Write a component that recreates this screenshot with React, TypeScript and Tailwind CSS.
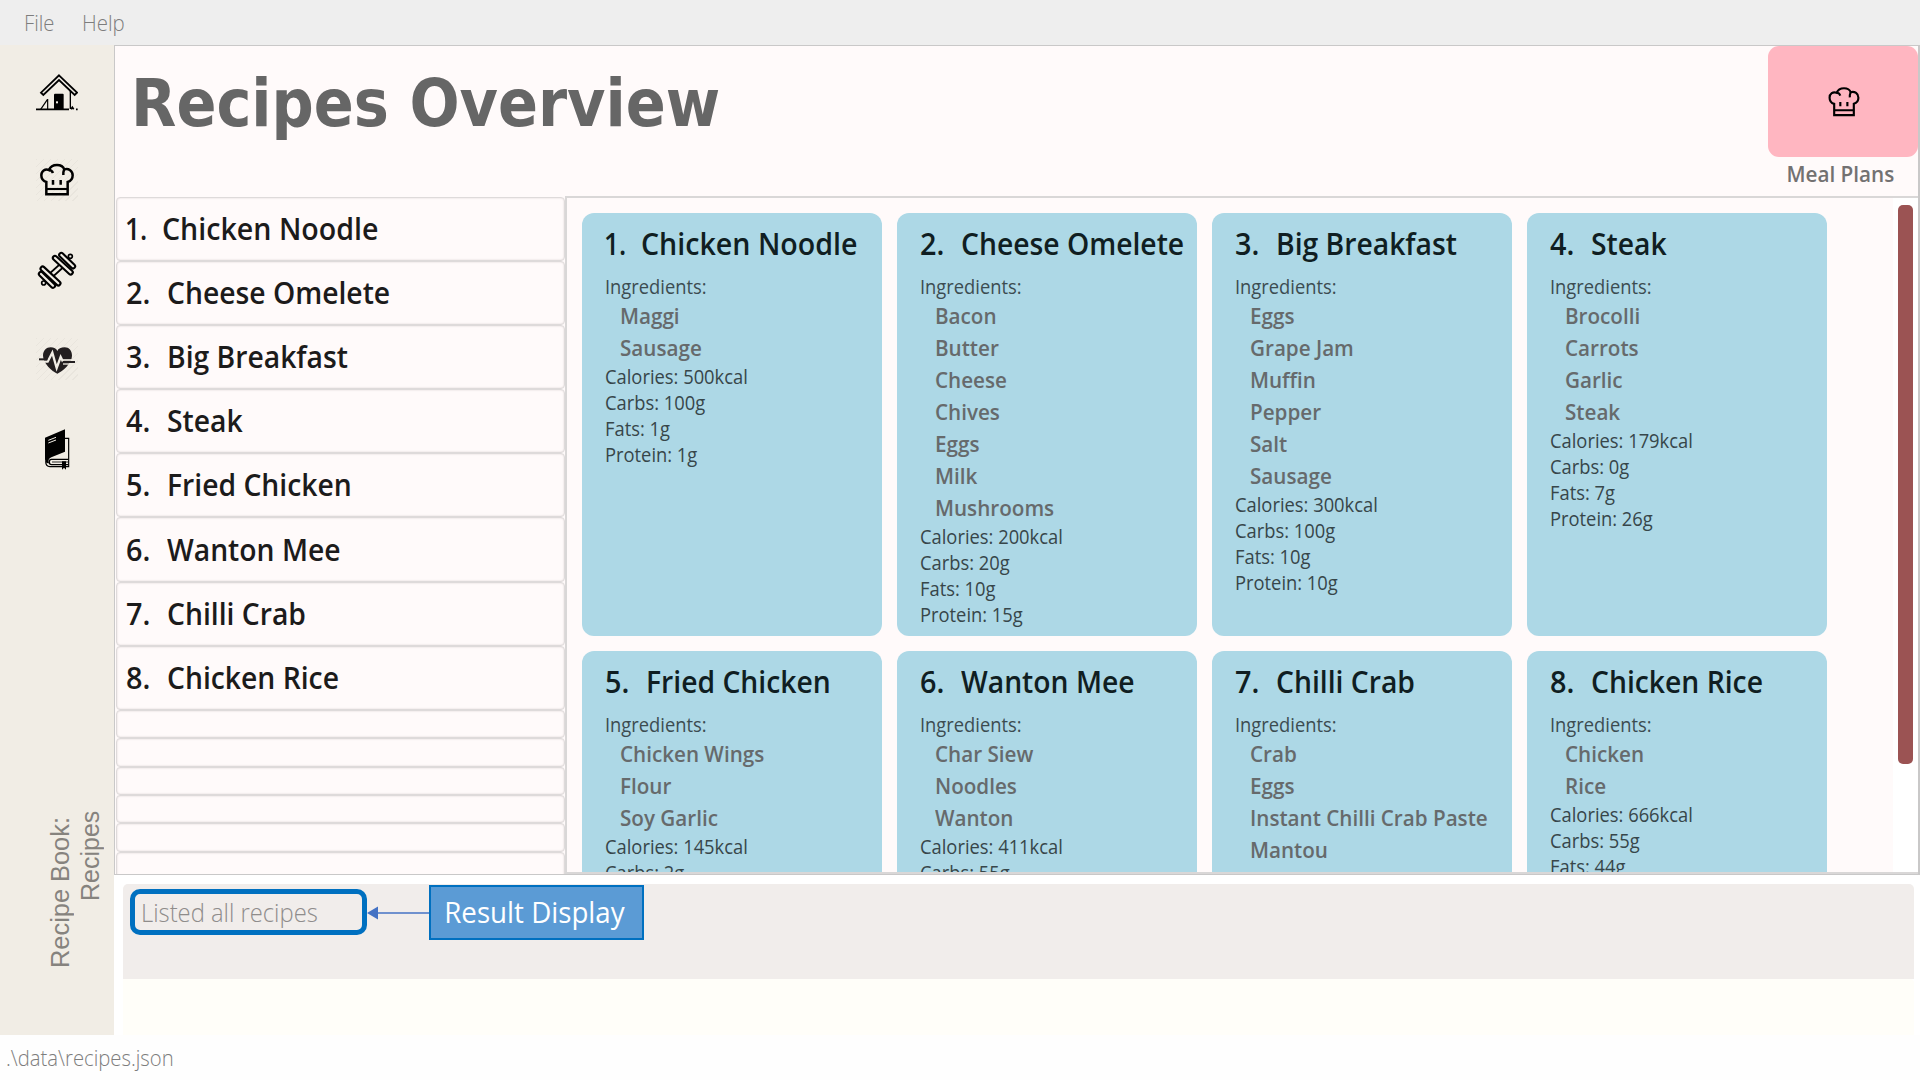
import type { ReactNode } from "react";

const CREAM = "#f1ede5";

type Recipe = {
  name: string;
  ingredients: string[];
  facts: string[];
};

const recipes: Recipe[] = [
  { name: "Chicken Noodle", ingredients: ["Maggi", "Sausage"], facts: ["Calories: 500kcal", "Carbs: 100g", "Fats: 1g", "Protein: 1g"] },
  {
    name: "Cheese Omelete",
    ingredients: ["Bacon", "Butter", "Cheese", "Chives", "Eggs", "Milk", "Mushrooms"],
    facts: ["Calories: 200kcal", "Carbs: 20g", "Fats: 10g", "Protein: 15g"],
  },
  {
    name: "Big Breakfast",
    ingredients: ["Eggs", "Grape Jam", "Muffin", "Pepper", "Salt", "Sausage"],
    facts: ["Calories: 300kcal", "Carbs: 100g", "Fats: 10g", "Protein: 10g"],
  },
  { name: "Steak", ingredients: ["Brocolli", "Carrots", "Garlic", "Steak"], facts: ["Calories: 179kcal", "Carbs: 0g", "Fats: 7g", "Protein: 26g"] },
  { name: "Fried Chicken", ingredients: ["Chicken Wings", "Flour", "Soy Garlic"], facts: ["Calories: 145kcal", "Carbs: 2g"] },
  { name: "Wanton Mee", ingredients: ["Char Siew", "Noodles", "Wanton"], facts: ["Calories: 411kcal", "Carbs: 55g"] },
  { name: "Chilli Crab", ingredients: ["Crab", "Eggs", "Instant Chilli Crab Paste", "Mantou"], facts: [] },
  { name: "Chicken Rice", ingredients: ["Chicken", "Rice"], facts: ["Calories: 666kcal", "Carbs: 55g", "Fats: 44g"] },
];

function HouseIcon() {
  return (
    <svg viewBox="0 0 126 126" className="size-[42px]" fill="none" stroke="#000">
      <path d="M69 19 L123 71 L116 78 L69 33 L22 78 L15 71 Z" strokeWidth="5.5" />
      <path d="M0 121 H99 M105 121 l4 -6 l4 6 M120 121 h5" strokeWidth="5" />
      <path d="M103 66 V120" strokeWidth="4" />
      <path d="M35 90 V120 M34 92 L14 121" strokeWidth="3.5" />
      <rect x="54" y="74" width="29" height="48" rx="3" fill="#000" stroke="none" />
      <rect x="60" y="97" width="6" height="6" fill={CREAM} stroke="none" />
    </svg>
  );
}

function ChefHatIcon({ className, stroke }: { className: string; stroke: number }) {
  return (
    <svg viewBox="0 0 126 126" className={className} fill="none" stroke="#000" strokeWidth={stroke}>
      <path d="M31 106 V69 C20 66 16 58 16 49 C16 36 27 28 39 33 C43 23 52 18 63 18 C74 18 82 23 85 31 C98 27 110 36 110 49 C110 58 105 66 95 69 V106 Z" />
      <path d="M30 90 H96" strokeWidth={stroke * 0.85} />
      <path d="M51 63 V77 M74 63 V77" />
      <path d="M39 33 C46 33 49 37 51 42 M85 31 C83 36 81 38 82 48" />
    </svg>
  );
}

const plates = ["M76 18 L111 52", "M57 27 L104 70", "M15 75 L51 110", "M20 59 L67 103"];

function DumbbellIcon() {
  return (
    <svg viewBox="0 0 126 126" className="size-[42px]" fill="none" strokeLinecap="round">
      <circle cx="103" cy="22" r="6" stroke="#000" strokeWidth="5" />
      <circle cx="23" cy="102" r="6" stroke="#000" strokeWidth="5" />
      <path d="M48 76 L78 49" stroke="#000" strokeWidth="19" strokeLinecap="butt" />
      <path d="M46 78 L80 47" stroke={CREAM} strokeWidth="8" strokeLinecap="butt" />
      {plates.map((d) => (
        <g key={d}>
          <path d={d} stroke="#000" strokeWidth="19" />
          <path d={d} stroke={CREAM} strokeWidth="6.5" />
        </g>
      ))}
    </svg>
  );
}

function HeartPulseIcon() {
  return (
    <svg viewBox="0 0 126 126" className="size-[42px]" fill="none">
      <path
        d="M64 107 C48 99 21 76 21 53 C21 38 31 28 44 28 C54 28 61 32 64 39 C67 32 75 28 86 28 C99 28 108 38 108 53 C108 76 80 99 64 107 Z"
        fill="#231f20"
      />
      <path d="M0 71 H35 L49 44 L62 90 L74 57 L81 71" stroke={CREAM} strokeWidth="7" />
      <path d="M81 66 H120" stroke={CREAM} strokeWidth="5" />
      <path d="M81 78 H120" stroke={CREAM} strokeWidth="4" />
      <path d="M9 64 H34" stroke="#231f20" strokeWidth="6" />
      <path d="M80 72 H117" stroke="#231f20" strokeWidth="6" />
    </svg>
  );
}

function BookIcon() {
  return (
    <svg viewBox="0 0 126 126" className="size-[42px]" fill="none" stroke="#000">
      <path d="M86 31 H98 V116 H42 C32 116 29 110 29 100" strokeWidth="3.5" />
      <path d="M27 29 L87 4 V71 L46 88 C38 91 36 98 39 106 C30 106 27 100 27 92 Z" fill="#000" stroke="none" />
      <path d="M97 94 H46 C38 94 38 110 46 110 H97" strokeWidth="4" />
      <path d="M48 102 H97" strokeWidth="2.5" />
      <path d="M78 100 H90 V125 L84 119 L78 125 Z" fill="#000" stroke="none" />
      <path d="M37 37 L60 28 M37 45 L60 36" stroke={CREAM} strokeWidth="3" />
    </svg>
  );
}

function Hatched({ children }: { children: ReactNode }) {
  return (
    <div className="size-[42px] bg-[repeating-linear-gradient(135deg,#e9e5dd_0px,#e9e5dd_1px,transparent_1px,transparent_5px)]">{children}</div>
  );
}

function NumberedName({ name, number }: { name: string; number: number }) {
  return (
    <span className="flex text-[30px] leading-10 font-semibold whitespace-pre">
      <span className={number === 1 ? "w-[36px] shrink-0" : "w-[41px] shrink-0"}>
        <span className={number === 1 ? "-ml-px inline-block origin-left scale-x-[0.88]" : "inline-block origin-left scale-x-[0.96]"}>{`${number}.`}</span>
      </span>
      <span className={number === 1 ? "w-max origin-left scale-x-[0.953]" : "w-max origin-left scale-x-[0.943]"}>{name}</span>
    </span>
  );
}

function RecipeCard({ recipe, number }: { recipe: Recipe; number: number }) {
  return (
    <article className="h-[423px] rounded-[12px] bg-[#add8e6] pl-[23px] pt-[11px] whitespace-pre">
      <h2 className="text-[#101e22]">
        <NumberedName name={recipe.name} number={number} />
      </h2>
      <div className="mt-[10px] w-max origin-left scale-x-[0.917] text-[20px] leading-[26px] text-[#3c4c51]">Ingredients:</div>
      <ul className="-mt-px pl-[15px] text-[22px] leading-8 font-semibold text-[#666a6c]">
        {recipe.ingredients.map((item) => (
          <li key={item} className="w-max origin-left scale-x-[0.938]">
            {item}
          </li>
        ))}
      </ul>
      <div className="pt-[1px] text-[20px] leading-[26.1px] text-[#37464a]">
        {recipe.facts.map((fact) => (
          <div key={fact} className="w-max origin-left scale-x-[0.917]">
            {fact}
          </div>
        ))}
      </div>
    </article>
  );
}

export default function App() {
  return (
    <div className="flex h-[1080px] w-[1920px] flex-col overflow-hidden bg-white font-['Open_Sans',sans-serif]">
      <nav className="flex h-[45px] shrink-0 items-center bg-[#eeeeee] pb-[2px] pl-[24px] text-[22px] leading-none font-light whitespace-pre text-[#7d7d7d]">
        <span className="w-[58px] origin-left scale-x-[0.92]">File</span>
        <span className="origin-left scale-x-[0.93]">Help</span>
      </nav>

      <div className="flex h-[990px] shrink-0">
        <aside className="flex w-[114px] shrink-0 flex-col bg-[#f1ede5] pt-[24px]">
          <div className="flex flex-col gap-[47.8px] pl-9">
            <HouseIcon />
            <Hatched>
              <ChefHatIcon className="size-[42px]" stroke={7.5} />
            </Hatched>
            <DumbbellIcon />
            <Hatched>
              <HeartPulseIcon />
            </Hatched>
            <BookIcon />
          </div>
          <div className="mt-[337px] ml-[45px] h-[163px] w-[60px] rotate-180 font-['Liberation_Sans',sans-serif] text-[25px] leading-[30px] text-[#86837e] [writing-mode:vertical-rl]">
            <div className="origin-top scale-y-[1.015] pt-[2px]">Recipe Book:</div>
            <div className="pt-[69px]">Recipes</div>
          </div>
        </aside>

        <main className="flex min-w-0 flex-1 flex-col">
          <section className="flex h-[830px] shrink-0 flex-col border border-r-2 border-[#c9c8c8] bg-[#fffafa]">
            <header className="flex h-[150px] shrink-0 justify-between">
              <h1 className="mt-[13px] ml-[15.5px] origin-left scale-x-[0.993] font-['DejaVu_Sans_Condensed','DejaVu_Sans',sans-serif] text-[66px] leading-[90px] font-bold whitespace-pre text-[#666666]">
                Recipes Overview
              </h1>
              <div className="flex w-[150px] flex-col items-center">
                <button className="flex h-[111px] w-[150px] items-center justify-center rounded-[11px] bg-[#ffb6c1] pl-[2px]">
                  <ChefHatIcon className="size-[42px] scale-[0.92]" stroke={7} />
                </button>
                <span className="ml-[-5px] scale-x-[0.94] text-[22px] leading-[32px] font-semibold whitespace-pre text-[#737171]">Meal Plans</span>
              </div>
            </header>

            <div className="flex h-[678px] shrink-0">
              <div className="w-[450px] shrink-0 overflow-hidden pt-px pl-px">
                {recipes.map((recipe, i) => (
                  <div
                    key={recipe.name}
                    className="flex h-[64.1px] items-center rounded-[4px] border border-[#dedada] pl-[8.5px] text-[#1c1b1b] shadow-[inset_0_0_2px_#d8d2d2]"
                  >
                    <NumberedName name={recipe.name} number={i + 1} />
                  </div>
                ))}
                {Array.from({ length: 6 }, (_, i) => (
                  <div key={i} className="h-[28.4px] rounded-[4px] border border-[#dedada] shadow-[inset_0_0_2px_#d8d2d2]" />
                ))}
              </div>

              <div className="flex flex-1 overflow-hidden border-2 border-r-0 border-[#d9d7d7]">
                <div className="grid flex-1 grid-cols-[repeat(4,300px)] content-start gap-[15px] pt-[15px] pl-[15px]">
                  {recipes.map((recipe, i) => (
                    <RecipeCard key={recipe.name} recipe={recipe} number={i + 1} />
                  ))}
                </div>
                <div className="w-[25px] shrink-0 bg-white pt-[7px] pl-[5px]">
                  <div className="h-[559px] w-[15px] rounded-[5px] bg-[#9b5353]" />
                </div>
              </div>
            </div>
          </section>

          <section className="flex h-[160px] shrink-0 flex-col pt-[9px] pr-[6px] pl-[9px]">
            <div className="flex h-[95px] shrink-0 items-start rounded-t-[5px] bg-[#f1edeb] pt-px pl-[7px]">
              <div className="mt-[4px] flex h-[46px] w-[237px] items-center rounded-[10px] border-[5px] border-[#0070c0] pl-[6px]">
                <span className="origin-left scale-x-[0.951] text-[25px] leading-none font-light whitespace-pre text-[#8f8c8b]">Listed all recipes</span>
              </div>
              <svg viewBox="0 0 62 14" className="mt-[21px] h-[14px] w-[62px]">
                <path d="M8 7 H62" stroke="#4472c4" strokeWidth="1.3" />
                <path d="M0 7 L11 0.5 V13.5 Z" fill="#4472c4" />
              </svg>
              <div className="flex h-[55px] w-[215px] items-center justify-center border-2 border-[#0070c0] bg-[#5b9bd5] pr-[4px] pb-[2px]">
                <span className="scale-x-[0.955] text-[29px] leading-none whitespace-pre text-white">Result Display</span>
              </div>
            </div>
            <div className="h-[56px] rounded-tr-[4px] bg-[#fffef9]" />
          </section>
        </main>
      </div>

      <footer className="flex h-[45px] shrink-0 items-center bg-[#fefefe] pb-[1px] pl-[6px]">
        <span className="origin-left scale-x-[0.922] text-[22px] font-light whitespace-pre text-[#7d7d7d]">.\data\recipes.json</span>
      </footer>
    </div>
  );
}
